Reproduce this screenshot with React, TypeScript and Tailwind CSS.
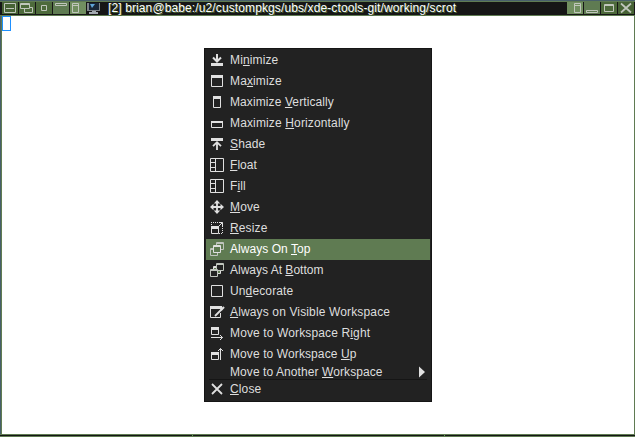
import type { ReactNode } from "react";

type Item = { pre: string; key: string; post: string; icon: ReactNode; track?: string };

const L = "#e0e0e0";
const DIM = "#bfc4bd";

function Glyph({ children, w = 18, h = 21 }: { children: ReactNode; w?: number; h?: number }) {
  return (
    <svg width={w} height={h} viewBox={`0 0 ${w} ${h}`} fill="none" stroke={L} className="block shrink-0">
      {children}
    </svg>
  );
}

const panel = <path d="M2.5 3.5h13v13h-13zM7.5 3.5v13M3 7.5h4M3 12.5h4" />;

const items: Item[] = [
  { pre: "Mi", key: "n", post: "imize", icon: <><path d="M3 13h12v3H3z" fill={L} stroke="none" /><path d="M9 4v8M5 7.5l4 4 4-4" strokeWidth="2" /></> },
  { pre: "Ma", key: "x", post: "imize", icon: <><path d="M3.5 4.5h11v11h-11z" /><path d="M3 4h12v3H3z" fill={L} stroke="none" /></> },
  { pre: "Maximize ", key: "V", post: "ertically", icon: <><path d="M5.5 4.5h7v11h-7z" /><path d="M5 4h8v3H5z" fill={L} stroke="none" /></>, track: "tracking-[0.1px]" },
  { pre: "Maximize ", key: "H", post: "orizontally", icon: <><path d="M3.5 8.5h11v6h-11z" /><path d="M3 8h12v2H3z" fill={L} stroke="none" /></>, track: "tracking-[0.14px]" },
  { pre: "", key: "S", post: "hade", icon: <><path d="M3 4h12v3H3z" fill={L} stroke="none" /><path d="M9 8v8M5 12.2l4-4 4 4" strokeWidth="1.8" /></> },
  { pre: "", key: "F", post: "loat", icon: panel, track: "tracking-[0.05px]" },
  { pre: "F", key: "i", post: "ll", icon: panel, track: "tracking-[0.1px]" },
  { pre: "", key: "M", post: "ove", icon: <><path d="M9 4v12M3 10h12" strokeWidth="1.8" /><path d="M9 3l3.200 3.500H5.800zM9 17l3.200-3.500H5.800zM2 10l3.500-3.200v6.400zM16 10l-3.500-3.200v6.400z" fill={L} stroke="none" /></> },
  { pre: "", key: "R", post: "esize", icon: <><path d="M3.5 8.5h7v7h-7z" /><path d="M3 8h8v3H3z" fill={L} stroke="none" /><path d="M3 4.5h8M14.5 8v8M3.5 4v4M11 15.5h4" strokeDasharray="1 1" /><path d="M11 8l3.500-3.500M11 4.5h3.500V8" /></> },
  { pre: "Always On ", key: "T", post: "op", icon: <><path d="M8.5 3.500h7v7h-7zM2.5 9.500h7v7h-7zM8 4.500h8M2 10.500h8" stroke={DIM} /><path d="M5.5 6.500h7v7h-7z" fill="#5f7b52" /><path d="M5 7.500h8" /></>, track: "tracking-[0.05px]" },
  { pre: "Always At ", key: "B", post: "ottom", icon: <><path d="M5.5 6.500h7v7h-7z" fill="#5f7b52" /><path d="M5 7.500h8" /><path d="M8.5 3.500h7v7h-7zM2.5 9.500h7v7h-7z" fill="#222222" stroke={DIM} /><path d="M8 4.500h8M2 10.500h8" stroke={DIM} /></>, track: "tracking-[0px]" },
  { pre: "Un", key: "d", post: "ecorate", icon: <path d="M3.5 4.5h11v11h-11z" /> },
  { pre: "", key: "A", post: "lways on Visible Workspace", icon: <><path d="M13 4.5H2.5v11h10V11" /><path d="M2 4h12v3H2z" fill={L} stroke="none" /><path d="M7 14l7-7" strokeWidth="1.8" /><path d="M13 8l3-3" strokeWidth="2.2" /></>, track: "tracking-[0.14px]" },
  { pre: "Move to Workspace R", key: "i", post: "ght", icon: <><path d="M3.5 4.5h7v7h-7z" /><path d="M3 4h8v3H3z" fill={L} stroke="none" /><path d="M3 14.500h11.500M12 12l2.500 2.500L12 17" /></>, track: "tracking-[0.13px]" },
  { pre: "Move to Workspace ", key: "U", post: "p", icon: <><path d="M3.5 8.5h7v7h-7z" /><path d="M3 8h8v3H3z" fill={L} stroke="none" /><path d="M12.500 16V4.500M10 7l2.500-2.500L15 7" /></>, track: "tracking-[0.1px]" },
];

function Label({ pre, k, post, track = "tracking-[0.13px]" }: { pre: string; k: string; post: string; track?: string }) {
  return (
    <span className={`whitespace-pre ${track}`}>
      {pre}
      <span className="underline decoration-1 underline-offset-[1px] [text-decoration-skip-ink:none]">{k}</span>
      {post}
    </span>
  );
}

function Menu() {
  return (
    <div className="absolute left-[204px] top-[48px] h-[354px] w-[228px] border border-[#151515] bg-[#222222] p-px text-[12px] leading-[14px] text-[#dedede]">
      {items.map((it, i) => (
        <div key={i} className={`flex h-[21px] items-start pl-[2px] ${i === 9 ? "bg-[#5f7b52] text-white" : ""}`}>
          <Glyph>{it.icon}</Glyph>
          <span className="pl-[4px] pt-[3px]"><Label pre={it.pre} k={it.key} post={it.post} track={it.track} /></span>
        </div>
      ))}
      <div className="flex h-[14px] items-center justify-between pl-[24px] pr-[5px]">
        <Label pre="Move to Another " k="W" post="orkspace" track="tracking-[0.08px]" />
        <svg width="6" height="12" viewBox="0 0 6 12"><path d="M0 0.500l6 5.500-6 5.500z" fill={L} /></svg>
      </div>
      <div className="mx-[3px] h-px bg-[#151515]" />
      <div className="flex h-[20px] items-start pl-[2px]">
        <Glyph h={20}><path d="M4 4l10 10M14 4L4 14" strokeWidth="1.8" /></Glyph>
        <span className="pl-[4px] pt-[2px]"><Label pre="" k="C" post="lose" /></span>
      </div>
    </div>
  );
}

function TitleButton({ tone, children }: { tone: string; children: ReactNode }) {
  return (
    <div className={`h-[12px] w-[16px] ${tone}`}>
      <svg width="16" height="12" viewBox="0 0 16 12" fill="none" stroke="#c0c6bc" className="block">{children}</svg>
    </div>
  );
}

export default function App() {
  return (
    <div className="relative flex h-[437px] w-[635px] flex-col overflow-hidden bg-white font-['Liberation_Sans',Arial,sans-serif]">
      <div className="h-px shrink-0 bg-[#48606b]" />
      <header className="flex h-[15px] shrink-0 border-y border-[#5f7b52] bg-[#161616] pl-[2px] pr-px">
        <div className="flex gap-px">
          <TitleButton tone="bg-[#476335]"><path d="M2.5 1.5h11v9h-11zM4 6.5h8" /></TitleButton>
          <TitleButton tone="bg-[#4d6a3b]"><path d="M1.5 1.5h9v5h-9zM1 2.5h10M5.500 7v3.500h8v-5H11" /></TitleButton>
          <TitleButton tone="bg-[#4d6a3b]"><path d="M5.5 3.5h5v5h-5z" /></TitleButton>
          <TitleButton tone="bg-[#5f7b52]"><path d="M2.5 1.5h11v2h-11z" /></TitleButton>
          <TitleButton tone="bg-[#718f60]"><path d="M2.5 1.5h6v9h-6zM2 3.5h7" /></TitleButton>
        </div>
        <svg width="14" height="13" viewBox="0 0 14 13" className="ml-px block">
          <path d="M0 1h13v8H0z" fill="#7f858b" />
          <path d="M2 1h10v7H2z" fill="#182638" />
          <path d="M3 2l5 0-3 4z" fill="#5fa5d8" />
          <path d="M5 9h4v1H5zM2 10h9v2H2z" fill="#a3a9b0" />
        </svg>
        <span className="-mt-px grow whitespace-pre pl-[7px] text-[12px] leading-[14px] tracking-[0.115px] text-white [text-shadow:1px_1px_0_#496535]">[2] brian@babe:/u2/custompkgs/ubs/xde-ctools-git/working/scrot</span>
        <div className="flex gap-px">
          <TitleButton tone="bg-[#718f60]"><path d="M7.5 1.5h6v9h-6zM7 3.5h7" /></TitleButton>
          <TitleButton tone="bg-[#5f7b52]"><path d="M2.5 8.5h11v2h-11z" /></TitleButton>
          <TitleButton tone="bg-[#4d6a3b]"><path d="M3.5 2.5h9v7h-9zM3 3.5h10" /></TitleButton>
          <TitleButton tone="bg-[#476335]"><path d="M3 1.500l10 9M13 1.500L3 10.500" strokeWidth="1.7" /></TitleButton>
        </div>
      </header>
      <main className="flex grow border-l border-r border-l-[#48606b] border-r-[#5f7b52] bg-white">
        <div className="w-px bg-[#5f7b52]" />
        <div className="h-[15px] w-[9px] border border-[#1e90ff]" />
      </main>
      <footer className="flex h-[3px] shrink-0 border-b border-t border-[#5f7b52] bg-[#151515] pl-[192px]">
        <div className="h-px w-px bg-[#5f9b52]" />
        <div className="ml-[251px] h-px w-px bg-[#5f9b52]" />
      </footer>
      <Menu />
    </div>
  );
}
